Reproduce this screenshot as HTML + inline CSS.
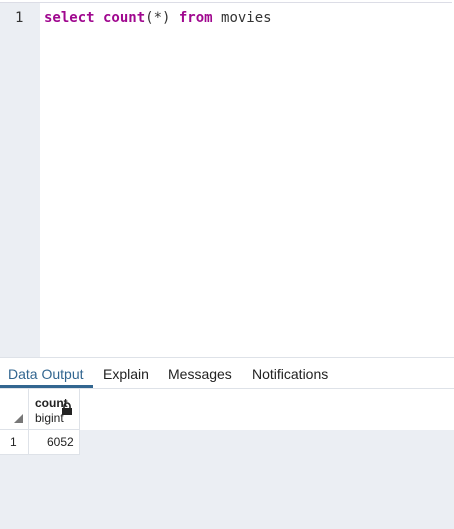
<!DOCTYPE html><html><head><style>
body{margin:0;width:454px;height:529px;background:#fff;position:relative;overflow:hidden;font-family:"Liberation Sans",sans-serif}
.a{position:absolute}
</style></head><body>
<div class="a" style="left:0;top:2px;width:452px;height:1px;background:#dcdde6"></div>
<div class="a" style="left:0;top:3px;width:40px;height:354px;background:#ebeef3"></div>
<div class="a" style="left:15px;top:10px;font:14px 'DejaVu Sans Mono',monospace;color:#333">1</div>
<div class="a" style="left:44px;top:10px;font:14px 'DejaVu Sans Mono',monospace;color:#333;white-space:pre"><b style="color:#a0088f">select count</b>(*) <b style="color:#a0088f">from</b> movies</div>
<div class="a" style="left:0;top:357px;width:454px;height:1px;background:#dee2e8"></div>
<div class="a" style="left:8px;top:366px;font-size:14px;color:#326690">Data Output</div>
<div class="a" style="left:103px;top:366px;font-size:14px;color:#222">Explain</div>
<div class="a" style="left:168px;top:366px;font-size:14px;color:#222">Messages</div>
<div class="a" style="left:252px;top:366px;font-size:14px;color:#222">Notifications</div>
<div class="a" style="left:0;top:385px;width:93px;height:3px;background:#326690"></div>
<div class="a" style="left:0;top:388px;width:454px;height:1px;background:#dee2e8"></div>
<div class="a" style="left:0;top:430px;width:454px;height:99px;background:#ebeef3"></div>
<div class="a" style="left:0;top:389px;width:80px;height:66px;background:#fff"></div>
<div class="a" style="left:28px;top:389px;width:1px;height:66px;background:#dee2e8"></div>
<div class="a" style="left:79px;top:389px;width:1px;height:66px;background:#dee2e8"></div>
<div class="a" style="left:0;top:429px;width:80px;height:1px;background:#dee2e8"></div>
<div class="a" style="left:0;top:454px;width:80px;height:1px;background:#dee2e8"></div>
<div class="a" style="left:14px;top:414px;width:0;height:0;border-left:9px solid transparent;border-bottom:9px solid #777"></div>
<div class="a" style="left:35px;top:396px;font-size:12px;font-weight:bold;color:#222">count</div>
<div class="a" style="left:35px;top:411px;font-size:12px;color:#222">bigint</div>
<svg class="a" style="left:61px;top:402px" width="12" height="13"><path d="M3 6V4a3 3 0 0 1 6 0v2" stroke="#222" stroke-width="1.6" fill="none"/><rect x="1" y="6" width="10" height="7" fill="#222"/></svg>
<div class="a" style="left:10px;top:435px;font-size:12px;color:#222">1</div>
<div class="a" style="left:47px;top:435px;font-size:12px;color:#222">6052</div>
</body></html>
